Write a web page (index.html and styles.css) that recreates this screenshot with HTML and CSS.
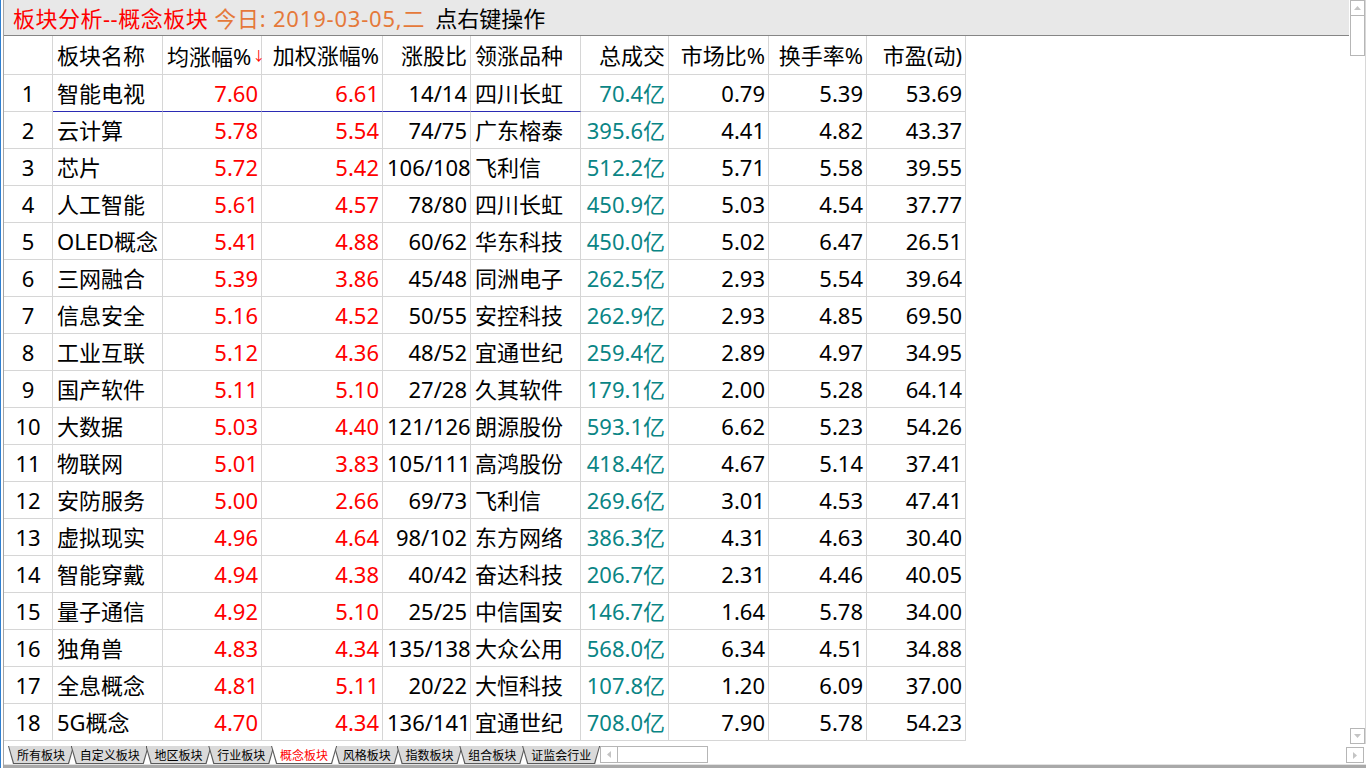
FILE: index.html
```html
<!DOCTYPE html>
<html lang="zh-CN">
<head>
  <meta charset="UTF-8">
  <title>板块分析--概念板块</title>
  <link rel="stylesheet" href="styles.css">
</head>
<body>
  <div class="app">
    <div class="main">
      <div class="content">
        <!-- 标题栏 -->
        <div class="titlebar">
          <span class="t-red">板块分析--概念板块</span>
          <span class="t-orange">今日: 2019-03-05,二</span>
          <span class="t-black">点右键操作</span>
        </div>

        <!-- 板块列表 -->
        <table class="grid">
          <colgroup>
            <col style="width:49px"><col style="width:110px"><col style="width:99px"><col style="width:121px"><col style="width:88px">
            <col style="width:110px"><col style="width:88px"><col style="width:100px"><col style="width:98px"><col style="width:99px">
          </colgroup>
          <thead>
            <tr>
              <th></th>
              <th class="l">板块名称</th>
              <th class="r">均涨幅%<span class="sort">↓</span></th>
              <th class="r">加权涨幅%</th>
              <th class="r">涨股比</th>
              <th class="l">领涨品种</th>
              <th class="r">总成交</th>
              <th class="r">市场比%</th>
              <th class="r">换手率%</th>
              <th class="r">市盈(动)</th>
            </tr>
          </thead>
          <tbody>
            <tr class="current"><td class="c">1</td><td class="l">智能电视</td><td class="r up">7.60</td><td class="r up">6.61</td><td class="r">14/14</td><td class="l">四川长虹</td><td class="r amt">70.4亿</td><td class="r">0.79</td><td class="r">5.39</td><td class="r">53.69</td></tr>
            <tr><td class="c">2</td><td class="l">云计算</td><td class="r up">5.78</td><td class="r up">5.54</td><td class="r">74/75</td><td class="l">广东榕泰</td><td class="r amt">395.6亿</td><td class="r">4.41</td><td class="r">4.82</td><td class="r">43.37</td></tr>
            <tr><td class="c">3</td><td class="l">芯片</td><td class="r up">5.72</td><td class="r up">5.42</td><td class="r">106/108</td><td class="l">飞利信</td><td class="r amt">512.2亿</td><td class="r">5.71</td><td class="r">5.58</td><td class="r">39.55</td></tr>
            <tr><td class="c">4</td><td class="l">人工智能</td><td class="r up">5.61</td><td class="r up">4.57</td><td class="r">78/80</td><td class="l">四川长虹</td><td class="r amt">450.9亿</td><td class="r">5.03</td><td class="r">4.54</td><td class="r">37.77</td></tr>
            <tr><td class="c">5</td><td class="l">OLED概念</td><td class="r up">5.41</td><td class="r up">4.88</td><td class="r">60/62</td><td class="l">华东科技</td><td class="r amt">450.0亿</td><td class="r">5.02</td><td class="r">6.47</td><td class="r">26.51</td></tr>
            <tr><td class="c">6</td><td class="l">三网融合</td><td class="r up">5.39</td><td class="r up">3.86</td><td class="r">45/48</td><td class="l">同洲电子</td><td class="r amt">262.5亿</td><td class="r">2.93</td><td class="r">5.54</td><td class="r">39.64</td></tr>
            <tr><td class="c">7</td><td class="l">信息安全</td><td class="r up">5.16</td><td class="r up">4.52</td><td class="r">50/55</td><td class="l">安控科技</td><td class="r amt">262.9亿</td><td class="r">2.93</td><td class="r">4.85</td><td class="r">69.50</td></tr>
            <tr><td class="c">8</td><td class="l">工业互联</td><td class="r up">5.12</td><td class="r up">4.36</td><td class="r">48/52</td><td class="l">宜通世纪</td><td class="r amt">259.4亿</td><td class="r">2.89</td><td class="r">4.97</td><td class="r">34.95</td></tr>
            <tr><td class="c">9</td><td class="l">国产软件</td><td class="r up">5.11</td><td class="r up">5.10</td><td class="r">27/28</td><td class="l">久其软件</td><td class="r amt">179.1亿</td><td class="r">2.00</td><td class="r">5.28</td><td class="r">64.14</td></tr>
            <tr><td class="c">10</td><td class="l">大数据</td><td class="r up">5.03</td><td class="r up">4.40</td><td class="r">121/126</td><td class="l">朗源股份</td><td class="r amt">593.1亿</td><td class="r">6.62</td><td class="r">5.23</td><td class="r">54.26</td></tr>
            <tr><td class="c">11</td><td class="l">物联网</td><td class="r up">5.01</td><td class="r up">3.83</td><td class="r">105/111</td><td class="l">高鸿股份</td><td class="r amt">418.4亿</td><td class="r">4.67</td><td class="r">5.14</td><td class="r">37.41</td></tr>
            <tr><td class="c">12</td><td class="l">安防服务</td><td class="r up">5.00</td><td class="r up">2.66</td><td class="r">69/73</td><td class="l">飞利信</td><td class="r amt">269.6亿</td><td class="r">3.01</td><td class="r">4.53</td><td class="r">47.41</td></tr>
            <tr><td class="c">13</td><td class="l">虚拟现实</td><td class="r up">4.96</td><td class="r up">4.64</td><td class="r">98/102</td><td class="l">东方网络</td><td class="r amt">386.3亿</td><td class="r">4.31</td><td class="r">4.63</td><td class="r">30.40</td></tr>
            <tr><td class="c">14</td><td class="l">智能穿戴</td><td class="r up">4.94</td><td class="r up">4.38</td><td class="r">40/42</td><td class="l">奋达科技</td><td class="r amt">206.7亿</td><td class="r">2.31</td><td class="r">4.46</td><td class="r">40.05</td></tr>
            <tr><td class="c">15</td><td class="l">量子通信</td><td class="r up">4.92</td><td class="r up">5.10</td><td class="r">25/25</td><td class="l">中信国安</td><td class="r amt">146.7亿</td><td class="r">1.64</td><td class="r">5.78</td><td class="r">34.00</td></tr>
            <tr><td class="c">16</td><td class="l">独角兽</td><td class="r up">4.83</td><td class="r up">4.34</td><td class="r">135/138</td><td class="l">大众公用</td><td class="r amt">568.0亿</td><td class="r">6.34</td><td class="r">4.51</td><td class="r">34.88</td></tr>
            <tr><td class="c">17</td><td class="l">全息概念</td><td class="r up">4.81</td><td class="r up">5.11</td><td class="r">20/22</td><td class="l">大恒科技</td><td class="r amt">107.8亿</td><td class="r">1.20</td><td class="r">6.09</td><td class="r">37.00</td></tr>
            <tr><td class="c">18</td><td class="l">5G概念</td><td class="r up">4.70</td><td class="r up">4.34</td><td class="r">136/141</td><td class="l">宜通世纪</td><td class="r amt">708.0亿</td><td class="r">7.90</td><td class="r">5.78</td><td class="r">54.23</td></tr>
          </tbody>
        </table>
      </div>

      <!-- 竖向滚动条 -->
      <div class="vscroll">
        <div class="vscroll-top">
          <div class="sbtn"><svg width="7" height="4" viewBox="0 0 7 4"><polygon points="0,4 7,4 3.5,0"/></svg></div>
          <div class="vthumb"></div>
        </div>
        <div class="sbtn"><svg width="7" height="4" viewBox="0 0 7 4"><polygon points="0,0 7,0 3.5,4"/></svg></div>
      </div>
    </div>

    <!-- 底部标签 -->
    <div class="bottombar">
      <div class="tabs">
        <div class="tab">所有板块</div>
        <div class="tab">自定义板块</div>
        <div class="tab">地区板块</div>
        <div class="tab">行业板块</div>
        <div class="tab active">概念板块</div>
        <div class="tab">风格板块</div>
        <div class="tab">指数板块</div>
        <div class="tab">组合板块</div>
        <div class="tab">证监会行业</div>
      </div>
      <div class="hscroll">
        <div class="hbtn"><svg width="4" height="7" viewBox="0 0 4 7"><polygon points="4,0 4,7 0,3.5"/></svg></div>
        <div class="hthumb"></div>
      </div>
      <div class="sbtn right-btn"><svg width="4" height="7" viewBox="0 0 4 7"><polygon points="0,0 0,7 4,3.5"/></svg></div>
    </div>
    <div class="bottom-edge"></div>
  </div>
</body>
</html>
```

FILE: styles.css
```css
/* Base */
* {
  box-sizing: border-box;
}

body {
  margin: 0;
  width: 1366px;
  height: 768px;
  overflow: hidden;
  background: #fff;
  border-left: 1px solid #2f7fd0;
  font-family: "Noto Sans", "Noto Sans CJK SC", sans-serif;
  color: #000;
}

.app {
  margin-left: 2px;
  height: 768px;
  border-left: 1px solid #a4a4a4;
  display: flex;
  flex-direction: column;
}

.main {
  height: 744px;
  display: flex;
}

.content {
  flex: 1;
  min-width: 0;
}

/* Title bar */
.titlebar {
  height: 36px;
  background: #e8e8e8;
  border-bottom: 1px solid #858585;
  padding-left: 9px;
  padding-bottom: 1px;
  display: flex;
  align-items: center;
  gap: 6px;
  font-size: 22px;
  white-space: nowrap;
}

.t-red { color: #ff0000; letter-spacing: 0.5px; }
.t-orange { color: #e5793a; letter-spacing: 0.8px; }
.t-black { color: #000; margin-left: 4px; }

/* Grid */
.grid {
  table-layout: fixed;
  border-collapse: separate;
  border-spacing: 0;
  width: 962px;
  font-size: 22px;
}

.grid th,
.grid td {
  height: 37px;
  padding: 0 3px 0 4px;
  border-right: 1px solid #d6d6d6;
  border-bottom: 1px solid #d6d6d6;
  font-weight: normal;
  line-height: 26px;
  white-space: nowrap;
  overflow: visible;
  vertical-align: middle;
}

.grid th {
  height: 39px;
}

.grid .l { text-align: left; }
.grid .r { text-align: right; }
.grid .c { text-align: center; padding: 0; }

.grid .up { color: #ff0000; }
.grid .amt { color: #0a8585; }

.sort {
  color: #ff0000;
  font-size: 13px;
  vertical-align: 5px;
  margin-left: 1px;
}

.grid th:nth-child(3) {
  padding-right: 5px;
}

.grid tr.current td:nth-child(n+2):nth-child(-n+6) {
  border-bottom-color: #2b2bb4;
}

/* Vertical scrollbar */
.vscroll {
  width: 17px;
  padding-left: 1px;
  border-right: 1px solid #d8d8d8;
  display: flex;
  flex-direction: column;
  justify-content: space-between;
}

.sbtn {
  width: 15px;
  height: 16px;
  border: 1px solid #b6b6b6;
  background: #fff;
  display: flex;
  align-items: center;
  justify-content: center;
}

.sbtn svg,
.hbtn svg {
  fill: #c4c4c4;
}

.vthumb {
  width: 15px;
  height: 40px;
  border: 1px solid #b6b6b6;
  border-top: none;
  background: #fff;
}

/* Bottom bar */
.bottombar {
  height: 20px;
  display: flex;
  align-items: flex-start;
  padding-top: 2px;
  padding-left: 4px;
}

.tabs {
  display: flex;
}

.tab {
  position: relative;
  z-index: 0;
  height: 18px;
  padding: 0 9px;
  margin-left: -3.25px;
  font-size: 12px;
  line-height: 18px;
  white-space: nowrap;
  font-family: "Noto Sans CJK SC", sans-serif;
}

.tab:first-child {
  margin-left: 0;
}

.tab::before,
.tab::after {
  content: "";
  position: absolute;
  z-index: -1;
  clip-path: polygon(0 0, 100% 0, calc(100% - 5px) 100%, 5px 100%);
}

.tab::before {
  inset: 0;
  background: #5a5a5a;
}

.tab::after {
  inset: 0 1px 1px 1px;
  background: #dadada;
}

.tab.active {
  z-index: 1;
  color: #ff0000;
}

.tab.active::after {
  background: #fff;
}

.hscroll {
  width: 108px;
  height: 17px;
  border: 1px solid #b6b6b6;
  display: flex;
}

.hbtn {
  width: 17px;
  border-right: 1px solid #b6b6b6;
  display: flex;
  align-items: center;
  justify-content: center;
}

.hthumb {
  flex: 1;
}

.right-btn {
  margin-left: auto;
  margin-right: 2px;
  margin-top: 1px;
  width: 18px;
}

.bottom-edge {
  height: 4px;
  border-top: 1px solid #e2e2e2;
  background: #a9a9a9;
}
```
